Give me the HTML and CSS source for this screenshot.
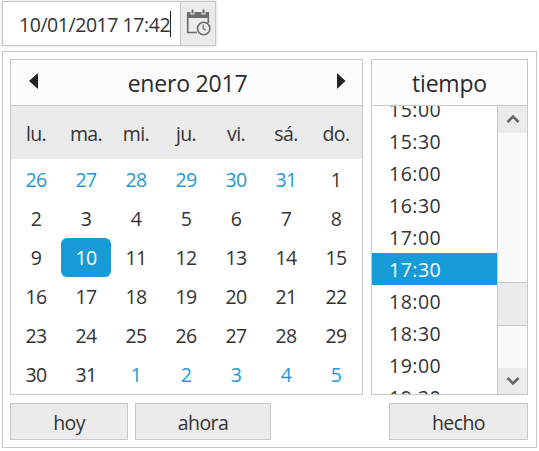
FILE: index.html
```html
<!DOCTYPE html>
<html lang="es">
<head>
<meta charset="utf-8">
<title>Fecha y hora</title>
<link rel="stylesheet" href="styles.css">
</head>
<body>
<div class="field">
  <div class="value"><span class="value-text">10/01/2017 17:42</span><span class="caret"></span></div>
  <div class="trigger">
    <svg width="26" height="28" viewBox="0 0 26 28">
      <path d="M1.700 4V23.500H11M22.300 4V14" fill="none" stroke="#6b6b6b" stroke-width="1.600"/>
      <path d="M1 3H4.500V5.500H8.500V3H15.500V5.500H19.500V3H23V9H1Z" fill="#6b6b6b"/>
      <path d="M6.500 0.500V4.500M17.500 0.500V4.500" stroke="#6b6b6b" stroke-width="2"/>
      <circle cx="17.700" cy="19.500" r="6.200" fill="#ebebeb" stroke="#6b6b6b" stroke-width="1.600"/>
      <path d="M17.200 15.500V19.500L19.700 21.300" fill="none" stroke="#6b6b6b" stroke-width="1.200"/>
    </svg>
  </div>
</div>
<div class="popup">
  <div class="panels">
    <div class="calendar">
      <div class="head cal-head">
        <svg class="arrow" width="10" height="16" viewBox="0 0 10 16"><path d="M9 0V16L0 8Z" fill="#222"/></svg>
        <span class="month">enero 2017</span>
        <svg class="arrow" width="10" height="16" viewBox="0 0 10 16"><path d="M1 0V16L9.500 8Z" fill="#222"/></svg>
      </div>
      <div class="week"><span>lu.</span><span>ma.</span><span>mi.</span><span>ju.</span><span>vi.</span><span>sá.</span><span>do.</span></div>
      <div class="days">
        <span class="other">26</span><span class="other">27</span><span class="other">28</span><span class="other">29</span><span class="other">30</span><span class="other">31</span><span>1</span>
        <span>2</span><span>3</span><span>4</span><span>5</span><span>6</span><span>7</span><span>8</span>
        <span>9</span><span class="selected">10</span><span>11</span><span>12</span><span>13</span><span>14</span><span>15</span>
        <span>16</span><span>17</span><span>18</span><span>19</span><span>20</span><span>21</span><span>22</span>
        <span>23</span><span>24</span><span>25</span><span>26</span><span>27</span><span>28</span><span>29</span>
        <span>30</span><span>31</span><span class="other">1</span><span class="other">2</span><span class="other">3</span><span class="other">4</span><span class="other">5</span>
      </div>
    </div>
    <div class="time">
      <div class="head time-head"><span>tiempo</span></div>
      <div class="time-body">
        <div class="times">
          <div>15:00</div><div>15:30</div><div>16:00</div><div>16:30</div><div>17:00</div><div class="now">17:30</div><div>18:00</div><div>18:30</div><div>19:00</div><div>19:30</div>
        </div>
        <div class="scroll">
          <div class="step"><svg width="14" height="10" viewBox="0 0 14 10"><path d="M1.500 8L7 2.500L12.500 8" fill="none" stroke="#666" stroke-width="2.600"/></svg></div>
          <div class="track-top"></div>
          <div class="thumb"></div>
          <div class="track-bottom"></div>
          <div class="step down"><svg width="14" height="10" viewBox="0 0 14 10"><path d="M1.500 2L7 7.500L12.500 2" fill="none" stroke="#666" stroke-width="2.600"/></svg></div>
        </div>
      </div>
    </div>
  </div>
  <div class="actions">
    <div class="btn today">hoy</div>
    <div class="btn current">ahora</div>
    <div class="btn done">hecho</div>
  </div>
</div>
</body>
</html>
```
FILE: styles.css
```css
* { box-sizing: border-box; }
body {
  margin: 0;
  padding: 1px 2px;
  background: #fff;
  color: #333;
  font: 19.5px/24px "Open Sans", "Noto Sans", sans-serif;
  letter-spacing: -0.6px;
}
svg { display: block; flex: none; }
.field {
  display: flex;
  width: 214px;
  height: 45px;
  border: 1px solid #c8c8c8;
  box-shadow: 0 0 3px rgba(0, 0, 0, 0.18);
}
.value {
  display: flex;
  align-items: center;
  width: 177px;
  padding-left: 16px;
}
.value-text { width: 151px; padding-top: 2px; white-space: nowrap; letter-spacing: -0.45px; }
.caret { width: 1px; height: 26px; background: #222; }
.trigger {
  flex: 1;
  padding: 7px 0 0 5px;
  background: #ebebeb;
  border-left: 1px solid #c8c8c8;
}
.popup {
  width: 535px;
  height: 397px;
  margin-top: 5px;
  padding: 7px;
  border: 1px solid #c8c8c8;
}
.panels { display: flex; gap: 8px; }
.calendar, .time { height: 336px; border: 1px solid #c8c8c8; }
.calendar { width: 353px; }
.time { width: 157px; }
.head {
  display: flex;
  align-items: center;
  height: 46px;
  background: #fcfcfc;
  border-bottom: 1px solid #c8c8c8;
  color: #2b2b2b;
  font-size: 23px;
}
.cal-head { justify-content: space-between; padding: 0 16px 0 18px; letter-spacing: -0.2px; }
.arrow { margin-bottom: 3px; }
.time-head { justify-content: center; letter-spacing: -0.2px; }
.week, .days {
  display: grid;
  grid-template-columns: repeat(7, 50px);
  text-align: center;
}
.week { height: 53px; padding-top: 1px; background: #ebebeb; line-height: 53px; }
.days { padding-top: 1px; grid-auto-rows: 39px; line-height: 40px; }
.other { color: #2597d4; }
.selected { background: #179bd7; color: #fff; border-radius: 6px; font-weight: 500; }
.time-body { display: flex; height: 288px; overflow: hidden; }
.times { width: 125px; height: 288px; overflow: hidden; letter-spacing: 0.5px; }
.times div { height: 32px; padding-left: 17px; line-height: 34px; }
.times div:first-child { margin-top: -13px; }
.times .now { background: #179bd7; color: #fff; font-weight: 500; }
.scroll {
  display: flex;
  flex-direction: column;
  width: 30px;
  background: #fafafa;
  border-left: 1px solid #c8c8c8;
}
.step { display: flex; justify-content: center; height: 27px; padding-top: 8px; background: #ebebeb; }
.down { height: 26px; }
.track-top { height: 149px; }
.thumb { height: 44px; background: #ebebeb; border: solid #c8c8c8; border-width: 1px 0; }
.track-bottom { flex: 1; }
.actions { display: flex; margin-top: 8px; }
.btn {
  height: 37px;
  background: #ebebeb;
  border: 1px solid #c8c8c8;
  text-align: center;
  line-height: 38px;
}
.today { width: 118px; margin-right: 7px; }
.current { width: 136px; }
.done { width: 139px; margin-left: auto; margin-right: 1px; }
```
